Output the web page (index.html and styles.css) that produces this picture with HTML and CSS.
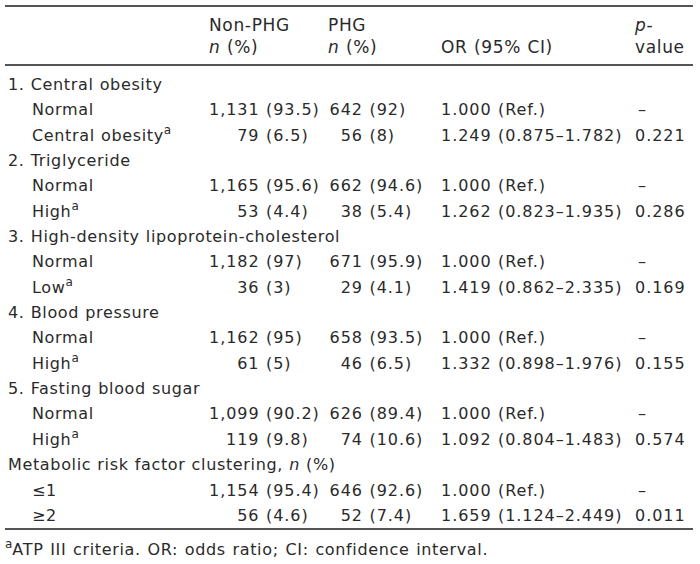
FILE: index.html
```html
<!DOCTYPE html>
<html>
<head>
<meta charset="utf-8">
<link rel="stylesheet" href="styles.css">
</head>
<body>
<div class="wrap">
<table class="tbl">
  <colgroup>
    <col class="c-label"><col class="c-non"><col class="c-phg"><col class="c-or"><col class="c-p">
  </colgroup>
  <thead>
    <tr>
      <th></th>
      <th>Non-PHG<br><i>n</i> (%)</th>
      <th>PHG<br><i>n</i> (%)</th>
      <th><br>OR (95% CI)</th>
      <th><i>p</i>-<br>value</th>
    </tr>
  </thead>
  <tbody>
    <tr class="first"><td colspan="5">1. Central obesity</td></tr>
    <tr><td class="sub">Normal</td><td><span class="n1">1,131</span> (93.5)</td><td><span class="n2">642</span> (92)</td><td>1.000 (Ref.)</td><td class="dash">–</td></tr>
    <tr><td class="sub">Central obesity<sup>a</sup></td><td><span class="n1">79</span> (6.5)</td><td><span class="n2">56</span> (8)</td><td>1.249 (0.875–1.782)</td><td>0.221</td></tr>
    <tr><td colspan="5">2. Triglyceride</td></tr>
    <tr><td class="sub">Normal</td><td><span class="n1">1,165</span> (95.6)</td><td><span class="n2">662</span> (94.6)</td><td>1.000 (Ref.)</td><td class="dash">–</td></tr>
    <tr><td class="sub">High<sup>a</sup></td><td><span class="n1">53</span> (4.4)</td><td><span class="n2">38</span> (5.4)</td><td>1.262 (0.823–1.935)</td><td>0.286</td></tr>
    <tr><td colspan="5">3. High-density lipoprotein-cholesterol</td></tr>
    <tr><td class="sub">Normal</td><td><span class="n1">1,182</span> (97)</td><td><span class="n2">671</span> (95.9)</td><td>1.000 (Ref.)</td><td class="dash">–</td></tr>
    <tr><td class="sub">Low<sup>a</sup></td><td><span class="n1">36</span> (3)</td><td><span class="n2">29</span> (4.1)</td><td>1.419 (0.862–2.335)</td><td>0.169</td></tr>
    <tr><td colspan="5">4. Blood pressure</td></tr>
    <tr><td class="sub">Normal</td><td><span class="n1">1,162</span> (95)</td><td><span class="n2">658</span> (93.5)</td><td>1.000 (Ref.)</td><td class="dash">–</td></tr>
    <tr><td class="sub">High<sup>a</sup></td><td><span class="n1">61</span> (5)</td><td><span class="n2">46</span> (6.5)</td><td>1.332 (0.898–1.976)</td><td>0.155</td></tr>
    <tr><td colspan="5">5. Fasting blood sugar</td></tr>
    <tr><td class="sub">Normal</td><td><span class="n1">1,099</span> (90.2)</td><td><span class="n2">626</span> (89.4)</td><td>1.000 (Ref.)</td><td class="dash">–</td></tr>
    <tr><td class="sub">High<sup>a</sup></td><td><span class="n1">119</span> (9.8)</td><td><span class="n2">74</span> (10.6)</td><td>1.092 (0.804–1.483)</td><td>0.574</td></tr>
    <tr><td colspan="5">Metabolic risk factor clustering, <i>n</i> (%)</td></tr>
    <tr><td class="sub">≤1</td><td><span class="n1">1,154</span> (95.4)</td><td><span class="n2">646</span> (92.6)</td><td>1.000 (Ref.)</td><td class="dash">–</td></tr>
    <tr class="last"><td class="sub">≥2</td><td><span class="n1">56</span> (4.6)</td><td><span class="n2">52</span> (7.4)</td><td>1.659 (1.124–2.449)</td><td>0.011</td></tr>
  </tbody>
</table>
<p class="note"><sup>a</sup>ATP III criteria. OR: odds ratio; CI: confidence interval.</p>
</div>
</body>
</html>
```

FILE: styles.css
```css
html, body {
  margin: 0;
  padding: 0;
  background: #fff;
}
body {
  font-family: "DejaVu Sans", Verdana, sans-serif;
  font-size: 16px;
  letter-spacing: 0.65px;
  word-spacing: 0.4px;
  color: #2a2a2a;
}
.wrap {
  padding: 5px 7px 0 5px;
}
.tbl {
  width: 688px;
  border-collapse: collapse;
  table-layout: fixed;
}
.c-label { width: 201px; }
.c-non { width: 119px; }
.c-phg { width: 113px; }
.c-or { width: 194px; }
.c-p { width: 61px; }

.tbl thead tr {
  border-top: 2px solid #555;
  border-bottom: 2px solid #555;
}
.tbl th {
  font-weight: normal;
  font-size: 17px;
  text-align: left;
  vertical-align: top;
  line-height: 22px;
  padding: 7px 0 6px 3px;
}
.tbl td {
  line-height: 19.35px;
  padding: 3px 0 3px 3px;
  white-space: nowrap;
  vertical-align: middle;
}
.tbl td + td {
  letter-spacing: 0.95px;
}
.tbl tr.first td {
  padding-top: 9px;
}
.tbl tr.last {
  border-bottom: 2px solid #555;
}
.tbl td.sub {
  padding-left: 27px;
}
.tbl td.dash {
  padding-left: 6px;
}
.n1 {
  display: inline-block;
  width: 50.5px;
  text-align: right;
}
.n2 {
  display: inline-block;
  width: 35px;
  text-align: right;
}
sup {
  font-size: 12px;
  letter-spacing: 0;
  line-height: 0;
  vertical-align: 7px;
}
.note {
  margin: 0;
  padding: 9px 0 0 0;
  line-height: 22px;
  word-spacing: 1px;
}
```
